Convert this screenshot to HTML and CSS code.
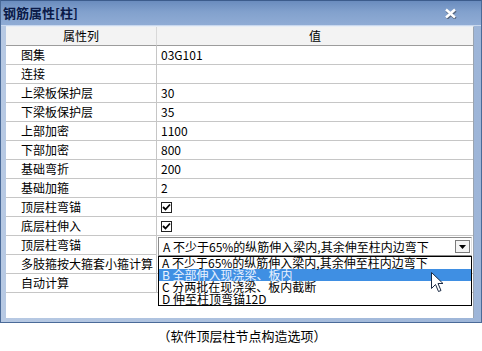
FILE: index.html
```html
<!DOCTYPE html>
<html>
<head>
<meta charset="utf-8">
<link rel="stylesheet" href="styles.css">
</head>
<body>
<div class="window">
  <div class="titlebar">
    <span class="title">钢筋属性[柱]</span>
    <svg class="close" width="13" height="11" viewBox="0 0 13 11">
      <path d="M2 2 L11 10 M11 2 L2 10" stroke="#55657e" stroke-width="3" fill="none" transform="translate(0.6,0.6)"/>
      <path d="M2 1.5 L11 9.5 M11 1.5 L2 9.5" stroke="#ffffff" stroke-width="2.4" fill="none"/>
    </svg>
  </div>
  <div class="client">
    <div class="grid">
      <div class="hcell">属性列</div><div class="hcell hval">值</div>
      <div class="lab">图集</div><div class="val">03G101</div>
      <div class="lab">连接</div><div class="val"></div>
      <div class="lab">上梁板保护层</div><div class="val">30</div>
      <div class="lab">下梁板保护层</div><div class="val">35</div>
      <div class="lab">上部加密</div><div class="val">1100</div>
      <div class="lab">下部加密</div><div class="val">800</div>
      <div class="lab">基础弯折</div><div class="val">200</div>
      <div class="lab">基础加箍</div><div class="val">2</div>
      <div class="lab">顶层柱弯锚</div><div class="val"><span class="chk"><svg width="9" height="9" viewBox="0 0 9 9"><path d="M1 4 L3.5 6.5 L8 1.5" stroke="#000" stroke-width="1.8" fill="none"/></svg></span></div>
      <div class="lab">底层柱伸入</div><div class="val"><span class="chk"><svg width="9" height="9" viewBox="0 0 9 9"><path d="M1 4 L3.5 6.5 L8 1.5" stroke="#000" stroke-width="1.8" fill="none"/></svg></span></div>
      <div class="lab">顶层柱弯锚</div>
      <div class="val comboCell">
        <div class="combo">
          <span class="ctext">A 不少于65%的纵筋伸入梁内,其余伸至柱内边弯下</span>
          <span class="cbtn"><svg width="7" height="4" viewBox="0 0 7 4"><path d="M0 0 H7 L3.5 4 Z" fill="#000"/></svg></span>
        </div>
        <div class="list">
          <div class="item">A 不少于65%的纵筋伸入梁内,其余伸至柱内边弯下</div>
          <div class="item sel">B 全部伸入现浇梁、板内</div>
          <div class="item">C 分两批在现浇梁、板内截断</div>
          <div class="item">D 伸至柱顶弯锚12D</div>
        </div>
      </div>
      <div class="lab">多肢箍按大箍套小箍计算</div><div class="val"></div>
      <div class="lab">自动计算</div><div class="val"></div>
    </div>
  </div>
  <svg class="cursor" width="13" height="21" viewBox="0 0 13 21">
    <path d="M0.5 0.5 L0.5 16.5 L4.5 12.5 L7.5 19.5 L10 18.5 L7 11.5 L12 11.5 Z" fill="#fff" stroke="#1a2a44" stroke-width="1"/>
  </svg>
</div>
<div class="caption">（软件顶层柱节点构造选项）</div>
</body>
</html>
```
FILE: styles.css
```css
html, body {
  margin: 0;
  padding: 0;
  background: #ffffff;
}
body {
  width: 482px;
  height: 351px;
  overflow: hidden;
  font-family: "Noto Sans CJK SC", "Noto Sans", sans-serif;
  font-size: 12px;
  color: #000;
}
.window {
  position: relative;
  height: 323px;
  box-sizing: border-box;
  border: 1px solid #4a6a98;
  border-top-color: #3c5c8c;
  background: linear-gradient(to right, #b7c9e3, #9db5d8);
  display: flex;
  flex-direction: column;
}
.titlebar {
  height: 24px;
  flex: none;
  display: flex;
  align-items: center;
  justify-content: space-between;
  padding: 0 24px 0 2px;
  background: linear-gradient(to bottom, #6a8cbe 0%, #82a1cd 45%, #90acd5 100%);
  border-bottom: 1px solid #c9d8ee;
}
.title {
  font-size: 13px;
  font-weight: bold;
  color: #0a1a48;
  line-height: 24px;
}
.close {
  display: block;
  margin-top: 1px;
}
.client {
  flex: 1;
  margin: 0 7px 4px 5px;
  background: #ffffff;
  border-top: 1px solid #e8eef6;
  border-right: 1px solid #9aa4b0;
}
.grid {
  display: grid;
  grid-template-columns: 151px 1fr;
  grid-auto-rows: 19px;
}
.hcell {
  background: #f3f3f3;
  border-bottom: 1px solid #9c9c9c;
  border-right: 1px solid #d8d8d8;
  box-sizing: border-box;
  text-align: center;
  line-height: 18px;
}
.hval {
  border-right: none;
}
.lab, .val {
  box-sizing: border-box;
  border-bottom: 1px solid #c6c6c6;
  line-height: 18px;
  white-space: nowrap;
}
.lab {
  padding-left: 15px;
  border-right: 1px solid #c6c6c6;
}
.val {
  padding-left: 4px;
}
.chk {
  display: inline-block;
  width: 11px;
  height: 11px;
  box-sizing: border-box;
  border: 1px solid #222;
  background: #fff;
  vertical-align: middle;
  margin-top: -3px;
  position: relative;
}
.chk svg {
  position: absolute;
  left: 0;
  top: 0;
}
.comboCell {
  position: relative;
  padding: 0;
  border-bottom: none;
}
.combo {
  position: absolute;
  left: 1px;
  top: 1px;
  right: 1px;
  height: 19px;
  box-sizing: border-box;
  border: 1px solid #8a8a8a;
  border-right-color: #e0e0e0;
  background: #fff;
  display: flex;
  align-items: center;
  justify-content: space-between;
  padding-left: 4px;
}
.ctext {
  line-height: 16px;
}
.cbtn {
  width: 15px;
  height: 13px;
  box-sizing: border-box;
  border: 1px solid #7a7a7a;
  background: #f4f4f4;
  display: flex;
  align-items: center;
  justify-content: center;
  margin-right: 1px;
}
.list {
  position: absolute;
  left: 1px;
  top: 20px;
  right: 1px;
  z-index: 2;
  border: 1px solid #000;
  background: #fff;
}
.item {
  height: 12px;
  line-height: 12px;
  padding-left: 3px;
  white-space: nowrap;
}
.item.sel {
  background: #3f8fe3;
  color: #eaf2ff;
}
.cursor {
  position: absolute;
  left: 430px;
  top: 271px;
  z-index: 5;
}
.caption {
  text-align: center;
  font-size: 13px;
  line-height: 16px;
  padding-top: 5px;
  padding-left: 2px;
}
```
